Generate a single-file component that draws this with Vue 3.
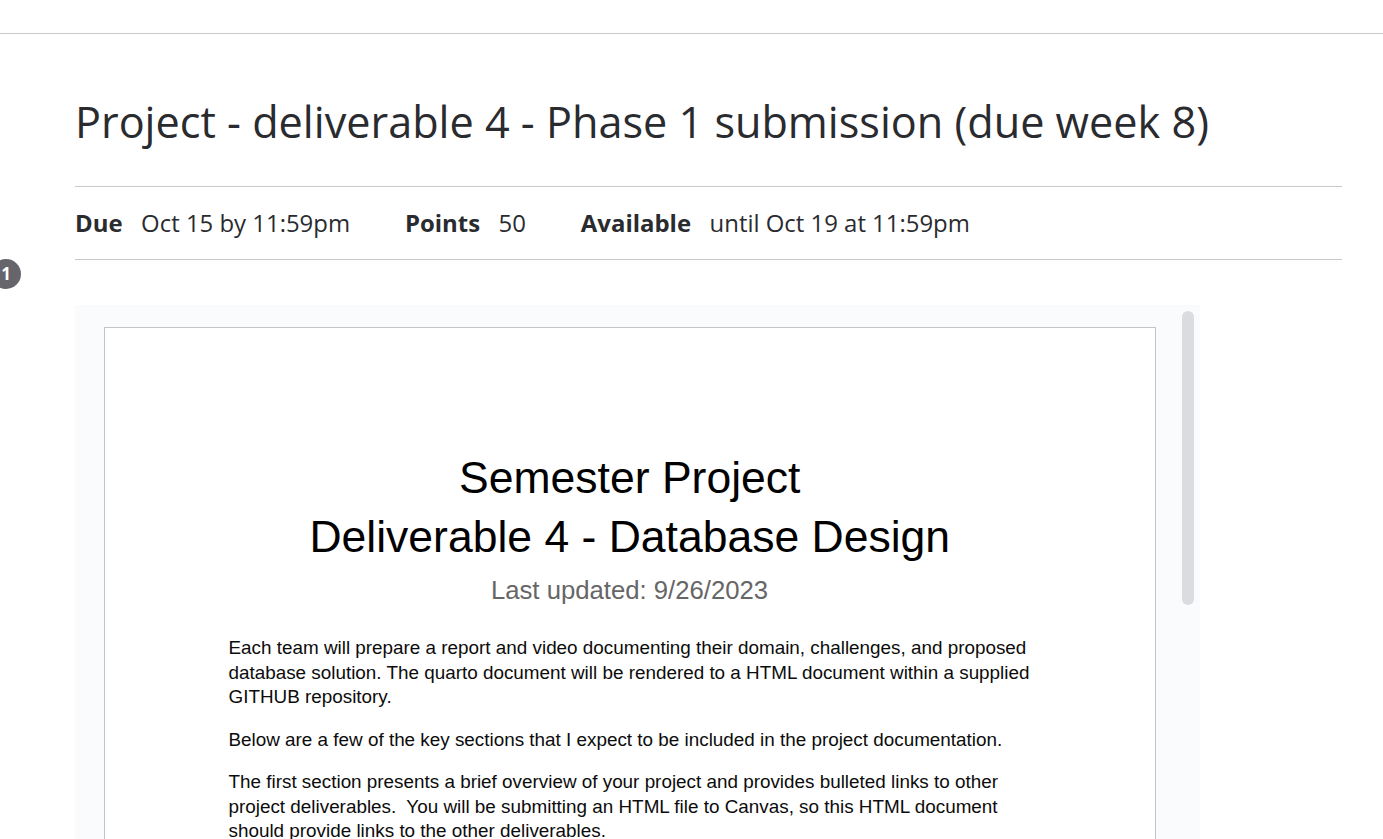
<template>
  <div class="page">
    <div class="topbar"></div>
    <main>
      <h1><span>Project - deliverable 4 - Phase 1 submission (due week 8)</span></h1>
      <ul class="details">
        <li><b>Due</b><span>Oct 15 by 11:59pm</span></li>
        <li><b>Points</b><span>50</span></li>
        <li><b>Available</b><span>until Oct 19 at 11:59pm</span></li>
      </ul>
      <section class="viewer">
        <article class="sheet">
          <h2><span>Semester Project</span><br /><span>Deliverable 4 - Database Design</span></h2>
          <div class="updated"><span>Last updated: 9/26/2023</span></div>
          <p v-for="(p, i) in paragraphs" :key="i">
            <span v-for="line in p" :key="line" class="line">{{ line }}</span>
          </p>
        </article>
        <div class="thumb"></div>
      </section>
    </main>
    <div class="badge">1</div>
  </div>
</template>

<script setup>
const paragraphs = [
  [
    'Each team will prepare a report and video documenting their domain, challenges, and proposed',
    'database solution. The quarto document will be rendered to a HTML document within a supplied',
    'GITHUB repository.',
  ],
  ['Below are a few of the key sections that I expect to be included in the project documentation.'],
  [
    'The first section presents a brief overview of your project and provides bulleted links to other',
    'project deliverables.  You will be submitting an HTML file to Canvas, so this HTML document',
    'should provide links to the other deliverables.',
  ],
]
</script>

<style>
html, body { margin: 0; overflow: hidden; background: #fff; }
</style>
<style scoped>
* { box-sizing: border-box; }
.page { position: relative; height: 839px; overflow: hidden; background: #fff; color: #2a2b2f; font-family: "Open Sans", "Noto Sans", sans-serif; }
.topbar { height: 34px; border-bottom: 1px solid #c7cacc; }
main { margin: 0 41px 0 75px; }
h1 { margin: 0; height: 152px; padding-top: 57px; font-size: 43.2px; line-height: 61px; font-weight: 400; white-space: nowrap; }
.details { list-style: none; margin: 0; padding: 0; height: 74px; border-top: 1px solid #c7cacc; border-bottom: 1px solid #c7cacc; display: flex; align-items: center; gap: 54.9px; font-size: 23.93px; line-height: 34px; white-space: nowrap; }
.details b { margin-right: 18.5px; font-weight: 700; }
.viewer { display: flex; margin-top: 45px; width: 1125px; height: 534px; padding: 22px 6px 0 29px; background: #f9fbfd; overflow: hidden; }
.sheet { width: 1052px; height: 600px; margin-right: 26px; padding: 120px 0 0 123.5px; flex: none; background: #fff; border: 1px solid #c4c4c4; font-family: "Liberation Sans", Arial, sans-serif; color: #000; }
h2 { margin: 0 124px 0 0; font-size: 44.5px; line-height: 59px; font-weight: 400; text-align: center; white-space: nowrap; }
.updated { margin-right: 124.5px; height: 48px; line-height: 49px; font-size: 25.7px; color: #666; text-align: center; }
p { margin: 0 0 18px; font-size: 18.86px; line-height: 24.5px; white-space: pre; color: #0c0c0c; }
.updated + p { margin-top: 22px; }
.line { display: block; }
.thumb { width: 12px; height: 294px; margin-top: -16px; border-radius: 6px; background: #dadce0; }
.badge { position: absolute; left: -9px; top: 259px; width: 30px; height: 30px; border-radius: 50%; background: #65656b; color: #fff; font-size: 17px; line-height: 30px; font-weight: 700; text-align: center; }
</style>
